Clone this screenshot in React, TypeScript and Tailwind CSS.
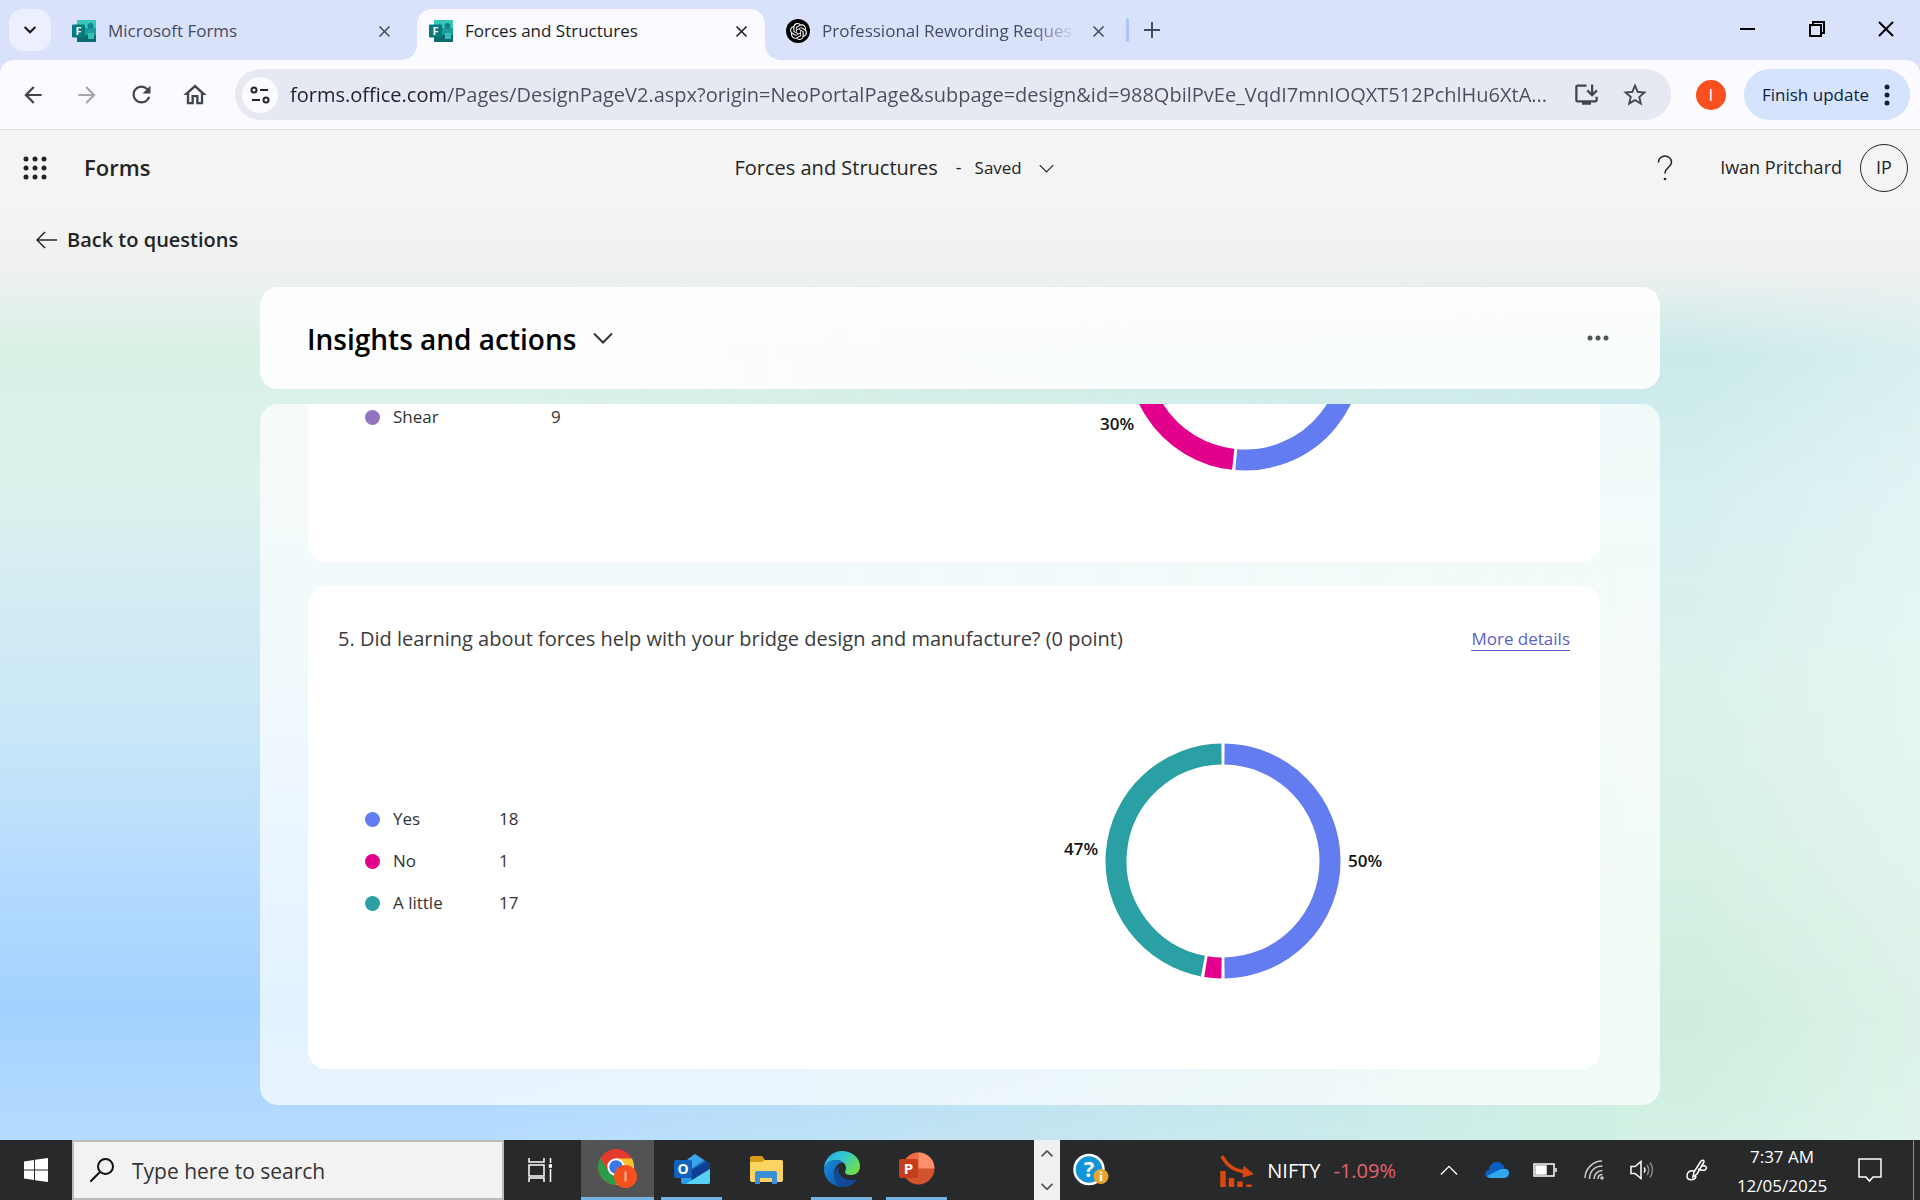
import type { ReactNode } from "react";
import { MdArrowBack, MdArrowForward, MdRefresh, MdOutlineHome, MdStarBorder, MdOutlineInstallDesktop, MdClose } from "react-icons/md";
import { SiOpenai } from "react-icons/si";

const BLUE = "#637cef";
const MAGENTA = "#e3008c";
const TEAL = "#2aa0a4";
const PURPLE = "#9373c0";

function FormsLogo() {
  return (
    <svg viewBox="0 0 24 22" className="h-[22px] w-6 shrink-0" aria-hidden="true">
      <rect x="5" y="0" width="19" height="22" rx="1" fill="#1b9e9b" />
      <rect x="5" y="0" width="19" height="8" fill="#37c6b9" />
      <rect x="5" y="15" width="19" height="7" rx="1" fill="#0c6b6f" />
      <circle cx="18.500" cy="6" r="3" fill="#12868b" />
      <rect x="16" y="13" width="6" height="6" fill="#33bfb3" />
      <rect x="0" y="4.500" width="13" height="13" rx="1" fill="#077a7d" />
      <text x="6.500" y="15" fontSize="11" fontWeight="700" textAnchor="middle" fill="#fff">F</text>
    </svg>
  );
}

function Chevron({ className }: { className: string }) {
  return (
    <svg viewBox="0 0 20 12" className={className} fill="none" stroke="currentColor" aria-hidden="true">
      <path d="M1 1.500 10 10.500 19 1.500" />
    </svg>
  );
}

function TabClose({ label }: { label: string }) {
  return (
    <button aria-label={label} className="flex size-6 shrink-0 items-center justify-center">
      <MdClose className="size-[19px]" />
    </button>
  );
}

function TabStrip() {
  return (
    <div className="flex h-[60px] shrink-0 bg-[#dae1fa] text-[17px] text-[#454b60]">
      <button aria-label="Search tabs" className="mt-[9px] ml-[9px] flex size-[42px] items-center justify-center rounded-[14px] bg-[#ecf0fe] text-[#16181f]">
        <Chevron className="w-[12px] stroke-[3.500]" />
      </button>
      <div className="mt-[9px] flex w-[366px] items-center pr-[21px] pb-[7px] pl-[21px]">
        <FormsLogo />
        <span className="ml-3 flex-1 truncate">Microsoft Forms</span>
        <TabClose label="Close Microsoft Forms" />
      </div>
      <div className="relative mt-[9px] flex w-[348px] items-center rounded-t-[15px] bg-[#fafaff] pr-3 pb-[7px] pl-3 text-[#1b1d24]">
        <span className="absolute bottom-0 -left-[14px] size-[14px] bg-[radial-gradient(circle_at_0_0,transparent_13px,#fafaff_14px)]" />
        <span className="absolute -right-[14px] bottom-0 size-[14px] bg-[radial-gradient(circle_at_100%_0,transparent_13px,#fafaff_14px)]" />
        <FormsLogo />
        <span className="ml-3 flex-1 truncate">Forces and Structures</span>
        <TabClose label="Close Forces and Structures" />
      </div>
      <div className="mt-[9px] flex w-[361px] items-center pr-[16px] pb-[7px] pl-[21px]">
        <span className="flex size-6 shrink-0 items-center justify-center rounded-full bg-black text-white">
          <SiOpenai className="size-[17px]" />
        </span>
        <span className="mr-1 ml-3 flex-1 whitespace-nowrap mask-r-from-80% mask-r-to-98%">Professional Rewording Reques</span>
        <TabClose label="Close Professional Rewording Request" />
      </div>
      <span className="mt-[18px] h-6 w-[3px] rounded-full bg-[#a9c6f7]" />
      <button aria-label="New tab" className="ml-[11px] flex h-[60px] w-6 items-center justify-center">
        <svg viewBox="0 0 16 16" className="size-4 fill-none stroke-current stroke-2" aria-hidden="true"><path d="M8 0v16M0 8h16" /></svg>
      </button>
      <div className="ml-auto flex text-black">
        <button aria-label="Minimize" className="flex h-[58px] w-[69px] items-center justify-center">
          <span className="h-[2px] w-[15px] bg-current" />
        </button>
        <button aria-label="Restore" className="flex h-[58px] w-[69px] items-center justify-center">
          <svg viewBox="0 0 16 16" className="size-4 fill-none stroke-current stroke-2" aria-hidden="true"><path d="M1 4h11v11H1zM4 4V1h11v11h-3" /></svg>
        </button>
        <button aria-label="Close window" className="flex h-[58px] w-[69px] items-center justify-center">
          <svg viewBox="0 0 16 16" className="size-4 fill-none stroke-current stroke-2" aria-hidden="true"><path d="m1 1 14 14M15 1 1 15" /></svg>
        </button>
      </div>
    </div>
  );
}

function AddressBar() {
  return (
    <div className="shrink-0 bg-[#dae1fa]">
      <div className="flex h-[70px] items-center rounded-t-[14px] border-b border-[#dcdee6] bg-[#fafaff] pr-[10px] pl-[6px] text-[#41454f]">
        <button aria-label="Back" className="flex w-[54px] justify-center"><MdArrowBack className="size-[26px]" /></button>
        <button aria-label="Forward" className="flex w-[54px] justify-center text-[#a5a6ae]"><MdArrowForward className="size-[26px]" /></button>
        <button aria-label="Reload" className="flex w-[54px] justify-center"><MdRefresh className="size-[27px]" /></button>
        <button aria-label="Home" className="flex w-[54px] justify-center"><MdOutlineHome className="size-[28px]" /></button>
        <div className="ml-[13px] flex h-[51px] min-w-0 flex-1 items-center rounded-full bg-[#e6e8f2] pr-3 pl-[7px]">
          <button aria-label="View site information" className="flex size-9 shrink-0 items-center justify-center rounded-full bg-[#fafaff] text-[#22252c]">
            <svg viewBox="0 0 20 18" className="h-[18px] w-5 fill-none stroke-current stroke-2" aria-hidden="true">
              <circle cx="4" cy="4" r="2.500" /><path d="M10 4h8M2 14h8" /><circle cx="16" cy="14" r="2.500" />
            </svg>
          </button>
          <input
            aria-label="Address"
            readOnly
            value="forms.office.com/Pages/DesignPageV2.aspx?origin=NeoPortalPage&subpage=design&id=988QbilPvEe_VqdI7mnIOQXT512PchlHu6XtA..."
            className="ml-3 h-10 min-w-0 flex-1 bg-[linear-gradient(90deg,#1c2030_156px,#4a4e5a_156px)] bg-clip-text text-[20px] text-transparent outline-none"
          />
          <button aria-label="Install Microsoft Forms" className="flex w-12 shrink-0 justify-center"><MdOutlineInstallDesktop className="size-[27px]" /></button>
          <button aria-label="Bookmark this tab" className="flex w-12 shrink-0 justify-center"><MdStarBorder className="size-[28px]" /></button>
        </div>
        <button aria-label="Profile" className="ml-[25px] flex size-[30px] items-center justify-center rounded-full bg-[#f8501f] text-[17px] text-white">I</button>
        <button className="ml-[18px] flex h-[51px] items-center gap-[15px] rounded-full bg-[#d5e3fd] pr-5 pl-[18px] text-[17px] whitespace-nowrap text-[#0b1e46]">
          Finish update
          <svg viewBox="0 0 6 22" className="h-[22px] w-[6px] fill-current" aria-hidden="true"><circle cx="3" cy="3" r="2.500" /><circle cx="3" cy="11" r="2.500" /><circle cx="3" cy="19" r="2.500" /></svg>
        </button>
      </div>
    </div>
  );
}

function FormsHeader() {
  const dots = [3, 12, 21];
  return (
    <header className="flex h-[75px] shrink-0 items-center pr-3 pl-[23px] text-[#242424]">
      <div className="flex w-[37%] items-center">
        <button aria-label="App launcher">
          <svg viewBox="0 0 24 24" className="size-6 fill-current" aria-hidden="true">
            {dots.map((y) => dots.map((x) => <circle key={x + "-" + y} cx={x} cy={y} r="2.500" />))}
          </svg>
        </button>
        <a href="#forms" className="ml-[37px] text-[22px] font-semibold">Forms</a>
      </div>
      <div className="ml-[14px] flex items-center">
        <span className="text-[20px]">Forces and Structures</span>
        <span className="ml-[18px] text-[18px]">-</span>
        <button className="ml-[13px] flex items-center gap-[17px] text-[17px]">
          Saved
          <Chevron className="mt-[2px] w-[15px] stroke-[1.500]" />
        </button>
      </div>
      <div className="flex flex-1 items-center justify-end">
        <button aria-label="Help" className="mr-[47px]">
          <svg viewBox="0 0 16 26" className="h-[26px] w-4 fill-none stroke-current stroke-[1.500]" aria-hidden="true">
            <path d="M1.500 7.500C1.500 3.500 4.500 1 8 1s6.500 2.500 6.500 6.200c0 5-6.500 5.300-6.500 11.300" /><circle cx="8" cy="24" r=".6" fill="currentColor" />
          </svg>
        </button>
        <span className="text-[18px]">Iwan Pritchard</span>
        <button aria-label="Account" className="ml-[18px] flex size-12 items-center justify-center rounded-full border border-[#242424] text-[18px]">IP</button>
      </div>
    </header>
  );
}

type Slice = { from: number; to: number; color: string };
type ChartLabel = { text: string; x: number; y: number };

function arc({ from, to }: Slice) {
  const r = 107;
  const point = (deg: number) => {
    const a = (deg * Math.PI) / 180;
    return `${(170 + r * Math.sin(a)).toFixed(2)} ${(120 - r * Math.cos(a)).toFixed(2)}`;
  };
  return `M${point(from)}A${r} ${r} 0 ${to - from > 180 ? 1 : 0} 1 ${point(to)}`;
}

function Donut({ slices, labels, className, viewBox, name }: { slices: Slice[]; labels: ChartLabel[]; className: string; viewBox: string; name: string }) {
  return (
    <svg viewBox={viewBox} className={className} role="img" aria-label={name}>
      {slices.map((s) => <path key={s.color} d={arc(s)} fill="none" stroke={s.color} strokeWidth="21" />)}
      {labels.map((l) => <text key={l.text} x={l.x} y={l.y} fontSize="17" fontWeight="600" fill="#111">{l.text}</text>)}
    </svg>
  );
}

function Legend({ rows, countWidth }: { rows: { color: string; label: string; count: number }[]; countWidth: string }) {
  return (
    <table className="text-left text-[17px] leading-[42px] text-[#333]">
      <tbody>
        {rows.map((r) => (
          <tr key={r.label} className="h-[42px]">
            <th scope="row" className={"p-0 font-normal " + countWidth}>
              <span className="mr-[13px] inline-block size-[15px] rounded-full align-[-2px]" style={{ backgroundColor: r.color }} />
              {r.label}
            </th>
            <td className="p-0">{r.count}</td>
          </tr>
        ))}
      </tbody>
    </table>
  );
}

function Results() {
  return (
    <main className="mx-auto flex w-full max-w-[1400px] flex-1 flex-col">
      <section className="flex h-[102px] shrink-0 items-center rounded-[18px] bg-white/90 pr-[51px] pl-[47px]">
        <h1 className="pt-[2px] text-[28px] font-semibold text-black">Insights and actions</h1>
        <button aria-label="Switch view" className="ml-[17px] text-[#333]"><Chevron className="w-5 stroke-2" /></button>
        <button aria-label="More options" className="ml-auto">
          <svg viewBox="0 0 22 6" className="h-[6px] w-[22px] fill-[#555]" aria-hidden="true"><circle cx="3" cy="3" r="2.500" /><circle cx="11" cy="3" r="2.500" /><circle cx="19" cy="3" r="2.500" /></svg>
        </button>
      </section>
      <div className="mt-[15px] mb-[35px] flex flex-1 flex-col gap-6 overflow-hidden rounded-[18px] bg-white/70 pr-[60px] pb-[36px] pl-[48px]">
        <section className="flex h-[158px] items-start rounded-b-[18px] bg-white pl-[57px]">
          <div className="-mt-2"><Legend countWidth="w-[186px]" rows={[{ color: PURPLE, label: "Shear", count: 9 }]} /></div>
          <Donut
            name="Question 4 responses"
            className="mr-[185px] ml-auto h-[69px] w-[340px]"
            viewBox="0 171 340 69"
            slices={[{ from: 72, to: 184.700, color: BLUE }, { from: 186.300, to: 290, color: MAGENTA }]}
            labels={[{ text: "30%", x: 25, y: 197 }]}
          />
        </section>
        <section className="flex flex-1 flex-col rounded-[18px] bg-white">
          <div className="flex items-center justify-between pt-[38px] pr-[30px] pl-[30px] leading-[30px]">
            <h2 className="text-[20px] text-[#3b3b3b]">5. Did learning about forces help with your bridge design and manufacture? (0 point)</h2>
            <a href="#details" className="border-b border-[#5b5fc7] text-[17px] leading-[22px] text-[#5b5fc7]">More details</a>
          </div>
          <div className="flex items-center pt-[87px] pl-[57px]">
            <Legend
              countWidth="w-[134px]"
              rows={[
                { color: BLUE, label: "Yes", count: 18 },
                { color: MAGENTA, label: "No", count: 1 },
                { color: TEAL, label: "A little", count: 17 },
              ]}
            />
            <Donut
              name="Yes 50%, No 3%, A little 47%"
              className="mr-[207px] ml-auto h-[240px] w-[340px]"
              viewBox="0 0 340 240"
              slices={[{ from: 0.800, to: 179.200, color: BLUE }, { from: 180.800, to: 189.200, color: MAGENTA }, { from: 190.800, to: 359.200, color: TEAL }]}
              labels={[{ text: "47%", x: 11, y: 114 }, { text: "50%", x: 295, y: 126 }]}
            />
          </div>
        </section>
      </div>
    </main>
  );
}

function Task({ label, active, open, children }: { label: string; active?: boolean; open?: boolean; children: ReactNode }) {
  return (
    <button aria-label={label} className={"relative flex flex-col items-center " + (active ? "w-[73px] bg-[#525355]" : "w-[75px]")}>
      <span className="flex flex-1 items-center">{children}</span>
      {(active || open) && <span className={"h-[3px] bg-[#76b3e3] " + (active ? "w-full" : "w-[61px]")} />}
    </button>
  );
}

function ChromeLogo() {
  return (
    <svg viewBox="0 0 40 40" className="size-10" aria-hidden="true">
      <circle cx="18" cy="18" r="18" fill="#e33b2e" />
      <path d="M2.400 9 10.500 22.500 18 27 22 35.500A18 18 0 0 1 2.400 9Z" fill="#2a9d48" />
      <path d="M18 9.500H33.900A18 18 0 0 1 18 36L26 22Z" fill="#fbc22d" />
      <circle cx="18" cy="18" r="8.700" fill="#fff" /><circle cx="18" cy="18" r="6.800" fill="#3a78e8" />
      <circle cx="27.500" cy="27.500" r="11.500" fill="#f4511e" />
      <path d="M27.500 22.500v10" stroke="#ffb39b" strokeWidth="2" />
    </svg>
  );
}

function OutlookLogo() {
  return (
    <svg viewBox="0 0 36 32" className="h-8 w-9" aria-hidden="true">
      <path d="M7 11 21 1l15 10v9H7Z" fill="#1a6fc9" />
      <path d="m14 6 7-5 9 6-14 10Z" fill="#3ba5ea" />
      <path d="M7 17h7l22-2v14q0 2-2 2H9q-2 0-2-2Z" fill="#2b9be9" />
      <path d="M36 15v14q0 2-2 2H12Z" fill="#5bd0f7" />
      <path d="m33 8 3 3v5L18 27l-4-8Z" fill="#103f92" />
      <rect y="7" width="18" height="18" rx="2" fill="#0f63bd" />
      <text x="9" y="21" fontSize="14" fontWeight="700" textAnchor="middle" fill="#fff">O</text>
    </svg>
  );
}

function FolderLogo() {
  return (
    <svg viewBox="0 0 33 28" className="h-7 w-[33px]" aria-hidden="true">
      <path d="M0 2q0-2 2-2h10l3 4h16q2 0 2 2v8H0Z" fill="#d99a17" />
      <path d="M0 6h12l3-2h16q2 0 2 2v18q0 2-2 2H2q-2 0-2-2Z" fill="#fcd462" />
      <path d="M5 28V17q0-2 2-2h18q2 0 2 2v11h-5v-6H10v6Z" fill="#3c8fd9" />
    </svg>
  );
}

function EdgeLogo() {
  return (
    <svg viewBox="0 0 36 36" className="size-9" aria-hidden="true">
      <defs>
        <linearGradient id="edgeTop" x1="0" y1="0" x2="1" y2=".6"><stop offset="0" stopColor="#25a8e0" /><stop offset=".5" stopColor="#32c6cf" /><stop offset="1" stopColor="#6be04b" /></linearGradient>
        <linearGradient id="edgeBase" x1="0" y1="0" x2="1" y2="1"><stop offset="0" stopColor="#1b8fe0" /><stop offset="1" stopColor="#0c4da2" /></linearGradient>
      </defs>
      <path d="M0 18C0 8 8 0 18 0s18 7 18 15c0 6-4 9-9 9-4 0-6-1-6-3 0-1 1-2 1-4 0-5-5-8-10-8C6 9 1 13 0 18Z" fill="url(#edgeTop)" />
      <path d="M0 18c1-5 6-9 12-9 3 0 6 1 8 3-5-1-10 4-10 11 0 6 4 11 9 13C8 36 0 28 0 18Z" fill="url(#edgeBase)" />
      <path d="M15 15c-1 3-1 7 2 10 4 4 10 5 16 3-3 5-8 8-14 8-5-2-9-7-9-13 0-3 2-6 5-8Z" fill="#114a98" />
    </svg>
  );
}

function PowerPointLogo() {
  return (
    <svg viewBox="0 0 36 34" className="h-[34px] w-9" aria-hidden="true">
      <circle cx="19.500" cy="16.500" r="16" fill="#d35230" />
      <path d="M19.500.5a16 16 0 0 0-16 16h16Z" fill="#ed6c47" />
      <path d="M19.500.5a16 16 0 0 1 16 16h-16Z" fill="#ff8f6b" />
      <rect y="7" width="19" height="19" rx="2" fill="#c43e1c" />
      <text x="9.500" y="22" fontSize="15" fontWeight="700" textAnchor="middle" fill="#fff">P</text>
    </svg>
  );
}

function Taskbar() {
  return (
    <footer className="flex h-[60px] shrink-0 bg-[#28292a] text-white">
      <button aria-label="Start" className="flex w-[72px] items-center justify-center">
        <svg viewBox="0 0 24 24" className="size-6 fill-white" aria-hidden="true"><path d="M0 3.400 10 2v9.500H0zM11 1.800 24 0v11.500H11zM0 12.500h10V22L0 20.600zM11 12.500h13V24L11 22.200z" /></svg>
      </button>
      <label className="flex w-[432px] items-center border-2 border-[#bcbcbc] bg-[#f2f2f2] pl-4 text-[#111]">
        <svg viewBox="0 0 24 24" className="size-6 fill-none stroke-current stroke-2" aria-hidden="true"><circle cx="15.500" cy="8.500" r="7.500" /><path d="M10 14 0 24" /></svg>
        <input aria-label="Search" placeholder="Type here to search" className="ml-[18px] min-w-0 flex-1 bg-transparent pt-1 text-[21px] outline-none placeholder:text-[#333]" />
      </label>
      <button aria-label="Task view" className="flex w-[77px] items-center pl-[24px]">
        <svg viewBox="0 0 24 24" className="size-6 fill-none stroke-white stroke-[1.500]" aria-hidden="true">
          <path d="M1 0v4h15V0M1 7h15v11H1zM1 24v-4h15v4M22.500 0v5M22.500 11v13" /><rect x="21.500" y="7" width="2" height="2" fill="#fff" />
        </svg>
      </button>
      <Task label="Google Chrome" active><ChromeLogo /></Task>
      <Task label="Outlook" open><OutlookLogo /></Task>
      <Task label="File Explorer"><FolderLogo /></Task>
      <Task label="Microsoft Edge" open><EdgeLogo /></Task>
      <Task label="PowerPoint" open><PowerPointLogo /></Task>
      <div className="ml-[80px] flex w-[26px] flex-col items-center justify-between bg-[#f0f0f0] py-[10px] text-[#555]">
        <button aria-label="Scroll up"><Chevron className="w-3 rotate-180 stroke-[3]" /></button>
        <button aria-label="Scroll down"><Chevron className="w-3 stroke-[3]" /></button>
      </div>
      <button aria-label="Get help" className="ml-[13px]">
        <svg viewBox="0 0 36 34" className="h-[34px] w-9 overflow-visible" aria-hidden="true">
          <circle cx="16" cy="16.500" r="14.500" fill="#1294d8" stroke="#fff" strokeWidth="2.500" />
          <text x="16" y="24" fontSize="22" fontWeight="700" textAnchor="middle" fill="#fff">?</text>
          <circle cx="28" cy="23.500" r="7.500" fill="#eaa42d" />
          <path d="M28 22v6M28 18.500v2" stroke="#fff" strokeWidth="2.500" />
        </svg>
      </button>
      <div className="ml-auto flex items-center">
        <button className="flex items-center pt-[2px] text-[20px]">
          <svg viewBox="0 0 34 34" className="mr-[13px] size-[34px] fill-none stroke-[#d9480f]" aria-hidden="true">
            <path d="M2 2C7 12 14 17 26 18" strokeWidth="3.500" /><path d="M24 12.500 33 20l-10 3Z" fill="#d9480f" />
            <path d="M3 17v16M11.500 24v9M20 27.500V33M29 30.500V33" strokeWidth="5.500" />
          </svg>
          NIFTY<span className="ml-[13px] text-[#e8606a]">-1.09%</span>
        </button>
        <button aria-label="Show hidden icons" className="ml-[44px]"><Chevron className="w-[18px] rotate-180 stroke-[1.500]" /></button>
        <button aria-label="OneDrive" className="ml-[27px]">
          <svg viewBox="0 0 24 16" className="h-4 w-6" aria-hidden="true"><path d="M4 8C4 3 8 0 12 0s7 3 8 7c3 0 4 2 4 4s-2 5-5 5H5c-3 0-5-2-5-4s2-4 4-4Z" fill="#0a5fc0" /><path d="M2 14 16 7h4c3 0 4 2 4 4s-2 5-5 5H5c-1 0-2-1-3-2Z" fill="#31a7ee" /></svg>
        </button>
        <button aria-label="Battery" className="ml-[24px]">
          <svg viewBox="0 0 24 14" className="h-[14px] w-6 fill-none stroke-white stroke-[1.500]" aria-hidden="true"><path d="M1 1h20v12H1zM23 5v4" /><path d="M3 3h10v8H3z" fill="#fff" /></svg>
        </button>
        <button aria-label="Wi-Fi" className="ml-[27px]">
          <svg viewBox="0 0 20 20" className="size-5 fill-none stroke-[#ccc] stroke-[1.500]" aria-hidden="true"><path d="M1 18C1 9 9 1 18 1M5.500 19C5.500 11 11 6 18.500 6M10 19c0-5 4-8.500 8.500-8.500M14 19c0-3 2-4.500 4.500-4.500" /><circle cx="18" cy="18" r="1" fill="#fff" /></svg>
        </button>
        <button aria-label="Volume" className="ml-[26px]">
          <svg viewBox="0 0 24 20" className="h-5 w-6 fill-none stroke-white stroke-[1.500]" aria-hidden="true"><path d="M1 6.500h4l6-5v17l-6-5H1zM14 7.500q2 2.500 0 5" /><path d="M17 5q3.500 5 0 10M20 2.500q5 7.500 0 15" stroke="#888" /></svg>
        </button>
        <button aria-label="Pen menu" className="ml-[32px]">
          <svg viewBox="0 0 22 22" className="size-[22px] fill-none stroke-white stroke-[1.500]" aria-hidden="true"><path d="M8 13 15 2q3-2 3 1L11 15l-4 3ZM8 12c-4-1-7 1-7 5 0 5 8 5 9 0M16 7c4-1 6 2 3 4-3 1-5 0-7-1" /></svg>
        </button>
        <button className="ml-[17px] w-[114px] pt-[2px] text-center text-[17px] leading-[29px]">7:37 AM<br />12/05/2025</button>
        <button aria-label="Notifications" className="ml-[19px]">
          <svg viewBox="0 0 24 25" className="h-[25px] w-6 fill-none stroke-white stroke-[1.500]" aria-hidden="true"><path d="M1 1h22v18h-8l-3.500 4L8 19H1Z" /></svg>
        </button>
        <button aria-label="Show desktop" className="ml-[31px] h-[60px] w-[7px] border-l border-[#8a8a8a]" />
      </div>
    </footer>
  );
}

function Backdrop() {
  return (
    <div aria-hidden="true" className="absolute inset-0 -z-10 bg-[linear-gradient(to_bottom,#c9e9e9_22%,#d6eff0_36%,#dbf2ec_55%,#d8f1e6_70%,#ceeddf_88%,#d2f1e4)]">
      <div className="absolute inset-0 bg-[linear-gradient(to_right,#ffffff00_88%,#ffffff4d)]" />
      <div className="absolute inset-0 bg-[linear-gradient(to_bottom,#d8f1e5_22%,#dcf2ec_35%,#d6eef2_43%,#c8e6f8_60%,#b3daff_75%,#a3d1ff_87%,#b6dbff)] mask-r-from-25% mask-r-to-85%" />
      <div className="absolute inset-0 bg-[linear-gradient(to_bottom,#f4f4f4_70px,#eef1f0_140px,#eef1f000_225px)]" />
    </div>
  );
}

export default function App() {
  return (
    <div className="flex min-h-screen flex-col font-['Open_Sans',sans-serif]">
      <TabStrip />
      <AddressBar />
      <div className="relative isolate flex flex-1 flex-col">
        <Backdrop />
        <FormsHeader />
        <nav className="flex h-[82px] shrink-0 items-start pt-5 pl-[36px]">
          <a href="#questions" className="flex items-center text-[20px] font-semibold text-[#242424]">
            <svg viewBox="0 0 22 18" className="mr-[9px] h-[18px] w-[22px] fill-none stroke-current stroke-[1.500]" aria-hidden="true"><path d="M21 9H1M9 1 1 9l8 8" /></svg>
            Back to questions
          </a>
        </nav>
        <Results />
      </div>
      <Taskbar />
    </div>
  );
}
